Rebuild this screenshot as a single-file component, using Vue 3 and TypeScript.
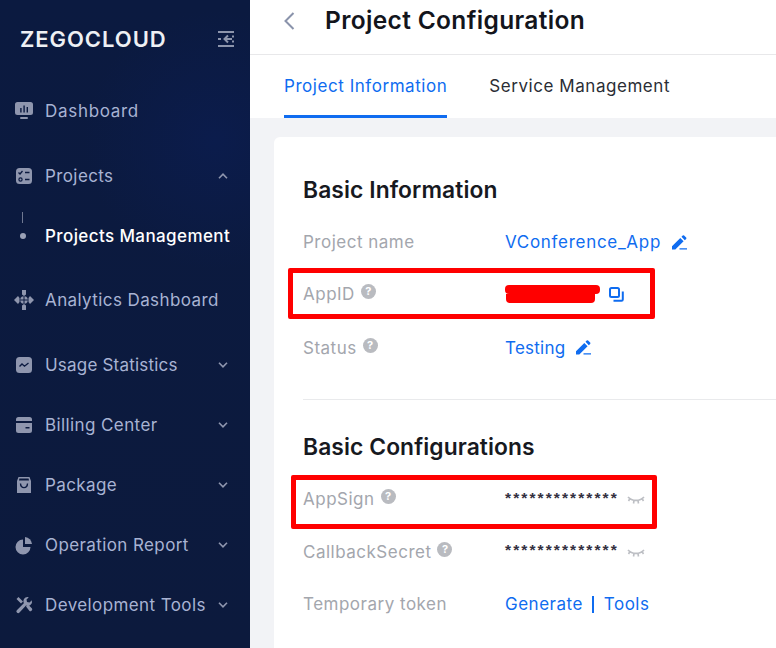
<script setup lang="ts">
interface NavItem {
  label: string
  icon: string
  chevron?: 'up' | 'down'
  cls: string
}
const navA: NavItem[] = [
  { label: 'Dashboard', icon: 'dash', cls: 'r-dash' },
  { label: 'Projects', icon: 'proj', chevron: 'up', cls: 'r-proj' },
]
const navB: NavItem[] = [
  { label: 'Analytics Dashboard', icon: 'ana', cls: 'r-ana' },
  { label: 'Usage Statistics', icon: 'usage', chevron: 'down', cls: 'r-usage' },
  { label: 'Billing Center', icon: 'bill', chevron: 'down', cls: 'r-std' },
  { label: 'Package', icon: 'pack', chevron: 'down', cls: 'r-std' },
  { label: 'Operation Report', icon: 'op', chevron: 'down', cls: 'r-std' },
  { label: 'Development Tools', icon: 'dev', chevron: 'down', cls: 'r-std' },
]
const groups = [navA, navB]
</script>

<template>
  <div class="page">
    <aside class="side">
      <div class="brand">
        <span class="logo">ZEGOCLOUD</span>
        <svg class="fold" width="18" height="18" viewBox="0 0 18 18" fill="none" stroke="#8d95ac" stroke-width="2">
          <path d="M1 2h16M1 16h16M1 9h3M15 6.500h2M15 11.500h2" />
          <path d="M15 9H8M11 5.500 7.500 9l3.500 3.500" />
        </svg>
      </div>
      <template v-for="(group, g) in groups" :key="g">
        <div v-for="item in group" :key="item.label" class="nav" :class="item.cls">
          <span class="ico">
            <svg width="18" height="18" viewBox="0 0 18 18" fill="#8f96ae">
              <template v-if="item.icon === 'dash'">
                <path fill-rule="evenodd" d="M2.500 0h13A2.500 2.500 0 0 1 18 2.500v8a2.500 2.500 0 0 1-2.500 2.500h-13A2.500 2.500 0 0 1 0 10.500v-8A2.500 2.500 0 0 1 2.500 0Zm2.700 6v4.500h1.400V6Zm3.200-2.500v7h1.400v-7Zm3.200 1.500v5.500h1.400V5Z" />
                <rect x="5" y="15" width="8" height="2" rx="1" />
              </template>
              <template v-else-if="item.icon === 'proj'">
                <rect x="1" y="1" width="16" height="16" rx="3.500" />
                <path d="M3.500 5.500 5 7l2.500-3M10 5.500h4.500M10 12.500h4.500" stroke="#0c1a40" stroke-width="1.300" fill="none" />
                <circle cx="5.500" cy="12.500" r="1.600" stroke="#0c1a40" stroke-width="1.200" fill="none" />
              </template>
              <template v-else-if="item.icon === 'ana'">
                <path d="M7 -1h4v4.500L9 5 7 3.500ZM7 19h4v-4.500L9 13l-2 1.500ZM-1 9l4-4 1.500 2v4L3 13ZM19 9l-4-4-1.500 2v4l1.500 2Z" />
                <path d="M5.500 7 7 5.500h4L12.500 7v4L11 12.500H7L5.500 11Z" />
                <path d="M9 5.500v7M5.500 9h7" stroke="#0c1a40" stroke-width="1" fill="none" />
              </template>
              <template v-else-if="item.icon === 'usage'">
                <rect x="1" y="1" width="16" height="16" rx="3.500" />
                <path d="M4.500 10.500 7 8l2.500 2.200L13.500 7" stroke="#0c1a40" stroke-width="1.400" fill="none" />
              </template>
              <template v-else-if="item.icon === 'bill'">
                <path d="M3.500 1h11A2.500 2.500 0 0 1 17 3.500V5H1V3.500A2.500 2.500 0 0 1 3.500 1ZM1 7h16v7.500a2.500 2.500 0 0 1-2.500 2.500h-11A2.500 2.500 0 0 1 1 14.500Zm9.500 4v1.600h4V11Z" fill-rule="evenodd" />
              </template>
              <template v-else-if="item.icon === 'pack'">
                <path d="M3.500 1h11L16 5v12H2V5Zm.9 1.500L4 4.500h10l-.400-2Z" fill-rule="evenodd" />
                <path d="M5.500 7.500C5.800 13 12.200 13 12.500 7.500" stroke="#0c1a40" stroke-width="1.400" fill="none" />
              </template>
              <template v-else-if="item.icon === 'op'">
                <path d="M8 3.500v7.500h7.500A7.500 7.500 0 1 1 8 3.500Z" />
                <path d="M10 1a7.500 7.500 0 0 1 7 7h-7Z" />
              </template>
              <template v-else>
                <path d="M12.500 1a4 4 0 0 1 1.300.2L11.500 3.500l.5 2.500 2.500.5 2.300-2.300A4.300 4.300 0 0 1 11 9.500L4.500 16.500a1.600 1.600 0 0 1-2.700-2.200L8.800 7.200A4.300 4.300 0 0 1 12.500 1Z" />
                <path d="M1.500 3 3.500 1 8 5.500 6 7.500ZM11 10.500l2-2 3.800 3.800a1.500 1.500 0 0 1 0 2.100l-.4.400a1.500 1.500 0 0 1-2.100 0Z" />
              </template>
            </svg>
          </span>
          <span class="nav-text">{{ item.label }}</span>
          <svg v-if="item.chevron" class="chev" width="10" height="6" viewBox="0 0 10 6" fill="none" stroke="#8f96ae" stroke-width="1.600">
            <path v-if="item.chevron === 'up'" d="M1 5.200 5 1.200l4 4" />
            <path v-else d="M1 .8l4 4 4-4" />
          </svg>
        </div>
        <div v-if="g === 0" class="sub">
          <span class="sub-tick"></span>
          <span class="sub-dot"></span>
          <span class="sub-text">Projects Management</span>
        </div>
      </template>
    </aside>

    <main class="main">
      <header class="head">
        <svg class="back" width="12" height="20" viewBox="0 0 12 20" fill="none" stroke="#8a93ab" stroke-width="2">
          <path d="M10.500 2 2.500 10l8 8" />
        </svg>
        <h1 class="title">Project Configuration</h1>
      </header>
      <nav class="tabs">
        <span class="tab active">Project Information</span>
        <span class="tab">Service Management</span>
      </nav>
      <section class="body">
        <div class="card">
          <h2 class="h2">Basic Information</h2>
          <div class="row r1">
            <span class="k">Project name</span>
            <span class="v">VConference_App</span>
            <svg class="pen" width="15" height="15" viewBox="0 0 15 15" fill="#0f6cf0"><path d="M0 11.200 8.300 3l3.300 3.300L3.300 14.500H0ZM9.500 1.800 10.700.6a1 1 0 0 1 1.400 0l2 2a1 1 0 0 1 0 1.400L12.800 5.200ZM7.500 13.200h7.500v1.300H7.500Z" /></svg>
          </div>
          <div class="row r2">
            <span class="k">AppID<i class="q">?</i></span>
            <span class="redact">
              <span class="redact-a"></span>
              <span class="redact-b"></span>
            </span>
            <svg class="copy" width="15" height="15" viewBox="0 0 15 15" fill="none" stroke="#0f6cf0" stroke-width="2">
              <rect x="1" y="1" width="9" height="9" rx="1.500" />
              <path d="M13.800 4.500v8a1.300 1.300 0 0 1-1.300 1.300h-8" />
            </svg>
            <span class="mark mark-a"></span>
          </div>
          <div class="row r3">
            <span class="k">Status<i class="q">?</i></span>
            <span class="v">Testing</span>
            <svg class="pen pen2" width="15" height="15" viewBox="0 0 15 15" fill="#0f6cf0"><path d="M0 11.200 8.300 3l3.300 3.300L3.300 14.500H0ZM9.500 1.800 10.700.6a1 1 0 0 1 1.400 0l2 2a1 1 0 0 1 0 1.400L12.800 5.200ZM7.500 13.200h7.500v1.300H7.500Z" /></svg>
          </div>
          <hr class="rule" />
          <h2 class="h2 h2b">Basic Configurations</h2>
          <div class="row r4">
            <span class="k">AppSign<i class="q">?</i></span>
            <span class="stars">**************</span>
            <svg class="eye" width="18" height="10" viewBox="0 0 18 10" fill="none" stroke="#bdbfc4" stroke-width="1.600">
              <path d="M1 2c4 4.500 12 4.500 16 0M3 3.500 1.500 6M7 5.500 6.500 8.500M11 5.500l.5 3M15 3.500 16.500 6" />
            </svg>
            <span class="mark mark-b"></span>
          </div>
          <div class="row r5">
            <span class="k">CallbackSecret<i class="q">?</i></span>
            <span class="stars">**************</span>
            <svg class="eye" width="18" height="10" viewBox="0 0 18 10" fill="none" stroke="#bdbfc4" stroke-width="1.600">
              <path d="M1 2c4 4.500 12 4.500 16 0M3 3.500 1.500 6M7 5.500 6.500 8.500M11 5.500l.5 3M15 3.500 16.500 6" />
            </svg>
          </div>
          <div class="row r6">
            <span class="k">Temporary token</span>
            <span class="v">Generate</span>
            <span class="bar"></span>
            <span class="v">Tools</span>
          </div>
        </div>
      </section>
    </main>
  </div>
</template>

<style>
html, body { margin: 0; padding: 0; overflow: hidden; background: #fff; }
</style>

<style scoped>
.page {
  width: 776px;
  height: 648px;
  display: flex;
  overflow: hidden;
  font-family: Inter, "Liberation Sans", sans-serif;
  background: #f2f3f6;
}
.side {
  width: 250px;
  flex: none;
  background:
    radial-gradient(circle at 215px 140px, #0b1c4c 0%, rgba(11, 28, 76, 0) 130px),
    linear-gradient(180deg, #0b1a40 0%, #0c1a3d 100%);
  box-sizing: border-box;
}
.brand {
  height: 80px;
  display: flex;
  align-items: center;
  padding: 0 15px 3px 20px;
  justify-content: space-between;
  box-sizing: border-box;
}
.logo {
  font-size: 22px;
  font-weight: 600;
  color: #eef0f4;
  letter-spacing: 0.950px;
  line-height: 26px;
}
.nav {
  display: flex;
  align-items: center;
  height: 60px;
  padding: 1px 22px 0 15px;
  box-sizing: border-box;
  color: #a8b3d3;
  font-size: 17px;
  letter-spacing: 0.400px;
}
.r-dash .nav-text { letter-spacing: 0.700px; }
.r-usage .nav-text { letter-spacing: 0.200px; }
.r-proj { margin-top: 5px; }
.r-ana { margin-top: 4px; }
.r-usage { margin-top: 5px; }
.ico { width: 18px; height: 18px; display: flex; margin-right: 12px; flex: none; }
.ico svg { overflow: visible; }
.nav-text { flex: 1; white-space: nowrap; }
.chev { flex: none; margin-left: 4px; }
.sub {
  height: 60px;
  display: flex;
  align-items: center;
  position: relative;
  padding: 1px 0 0 45px;
  box-sizing: border-box;
}
.sub-tick {
  position: absolute;
  left: 22px;
  top: 7px;
  width: 1px;
  height: 11px;
  background: #6f7891;
}
.sub-dot {
  position: absolute;
  left: 20px;
  top: 28px;
  width: 6px;
  height: 6px;
  border-radius: 50%;
  background: #9aa1b6;
}
.sub-text {
  color: #fff;
  font-size: 17px;
  font-weight: 500;
  letter-spacing: 0.400px;
  white-space: nowrap;
}
.main { flex: 1; min-width: 0; display: flex; flex-direction: column; }
.head {
  height: 55px;
  flex: none;
  background: #fff;
  border-bottom: 1px solid #e8e8ea;
  box-sizing: border-box;
  display: flex;
  align-items: center;
  padding: 0 0 14px 33px;
}
.back { margin-right: 30px; flex: none; margin-top: 1px; }
.title {
  margin: 0;
  font-size: 24.500px;
  font-weight: 600;
  color: #13151c;
  letter-spacing: 0.350px;
  white-space: nowrap;
}
.tabs {
  height: 63px;
  flex: none;
  background: #fff;
  display: flex;
  padding-left: 34px;
  gap: 42px;
  box-sizing: border-box;
}
.tab {
  font-size: 17px;
  line-height: 62px;
  color: #2a2d35;
  letter-spacing: 0.550px;
  white-space: nowrap;
  box-sizing: border-box;
  height: 63px;
}
.tab.active {
  color: #0f6cf0;
  border-bottom: 3px solid #0f6cf0;
}
.body { flex: 1; min-height: 0; padding: 19px 0 0 24px; box-sizing: border-box; }
.card {
  background: #fff;
  border-top-left-radius: 6px;
  height: 520px;
  padding: 36px 0 0 29px;
  box-sizing: border-box;
}
.h2 {
  margin: 0;
  font-size: 22.800px;
  line-height: 34px;
  font-weight: 600;
  color: #17191f;
  letter-spacing: 0.100px;
  white-space: nowrap;
}
.row {
  display: flex;
  align-items: center;
  height: 52px;
  position: relative;
  font-size: 17px;
  letter-spacing: 0.500px;
}
.r1 { margin-top: 9px; }
.r1 .v { letter-spacing: 0.700px; }
.r3 { height: 53px; margin-top: 1px; }
.r3 .v { letter-spacing: 0.250px; }
.r4 { margin-top: 9px; }
.r5 { height: 53px; }
.r6 { height: 52px; }
.r6 .v:first-child { margin-left: 1px; }
.k {
  width: 202px;
  flex: none;
  color: #a3a6ad;
  white-space: nowrap;
  display: flex;
  align-items: center;
}
.q {
  width: 15px;
  height: 15px;
  border-radius: 50%;
  background: #b9bbc0;
  color: #fff;
  font-size: 11px;
  line-height: 15px;
  font-weight: 700;
  font-style: normal;
  text-align: center;
  letter-spacing: 0;
  margin-left: 6px;
  margin-top: -5px;
}
.v { color: #0f6cf0; white-space: nowrap; }
.pen { margin-left: 11px; flex: none; }
.pen2 { margin-left: 11px; }
.redact {
  width: 95px;
  height: 18px;
  display: flex;
  flex-direction: column;
  flex: none;
  margin-top: -1px;
}
.redact-a { width: 95px; height: 9px; background: #f00; border-radius: 4px; }
.redact-b { width: 89px; height: 9px; background: #f00; margin-left: 1px; border-radius: 0 0 4px 4px; }
.copy { margin-left: 9px; flex: none; margin-top: 1px; }
.mark {
  position: absolute;
  border: 5px solid #f00;
  border-radius: 2px;
  box-sizing: border-box;
  pointer-events: none;
}
.mark-a { left: -15px; top: 0; width: 367px; height: 51px; }
.mark-b { left: -12px; top: 2px; width: 366px; height: 54px; }
.rule {
  border: 0;
  border-top: 1px solid #e9eaec;
  margin: 25px 0 0;
}
.h2b { margin-top: 30px; }
.stars {
  color: #33303f;
  font-family: "Liberation Sans", sans-serif;
  font-size: 15.500px;
  font-weight: 700;
  letter-spacing: 2.100px;
  width: 122px;
  white-space: nowrap;
  flex: none;
  margin-top: -3px;
}
.eye { flex: none; margin-top: 2px; }
.bar {
  width: 2px;
  height: 17px;
  background: #0f6cf0;
  margin: 0 10px 0 9px;
  flex: none;
}
</style>
